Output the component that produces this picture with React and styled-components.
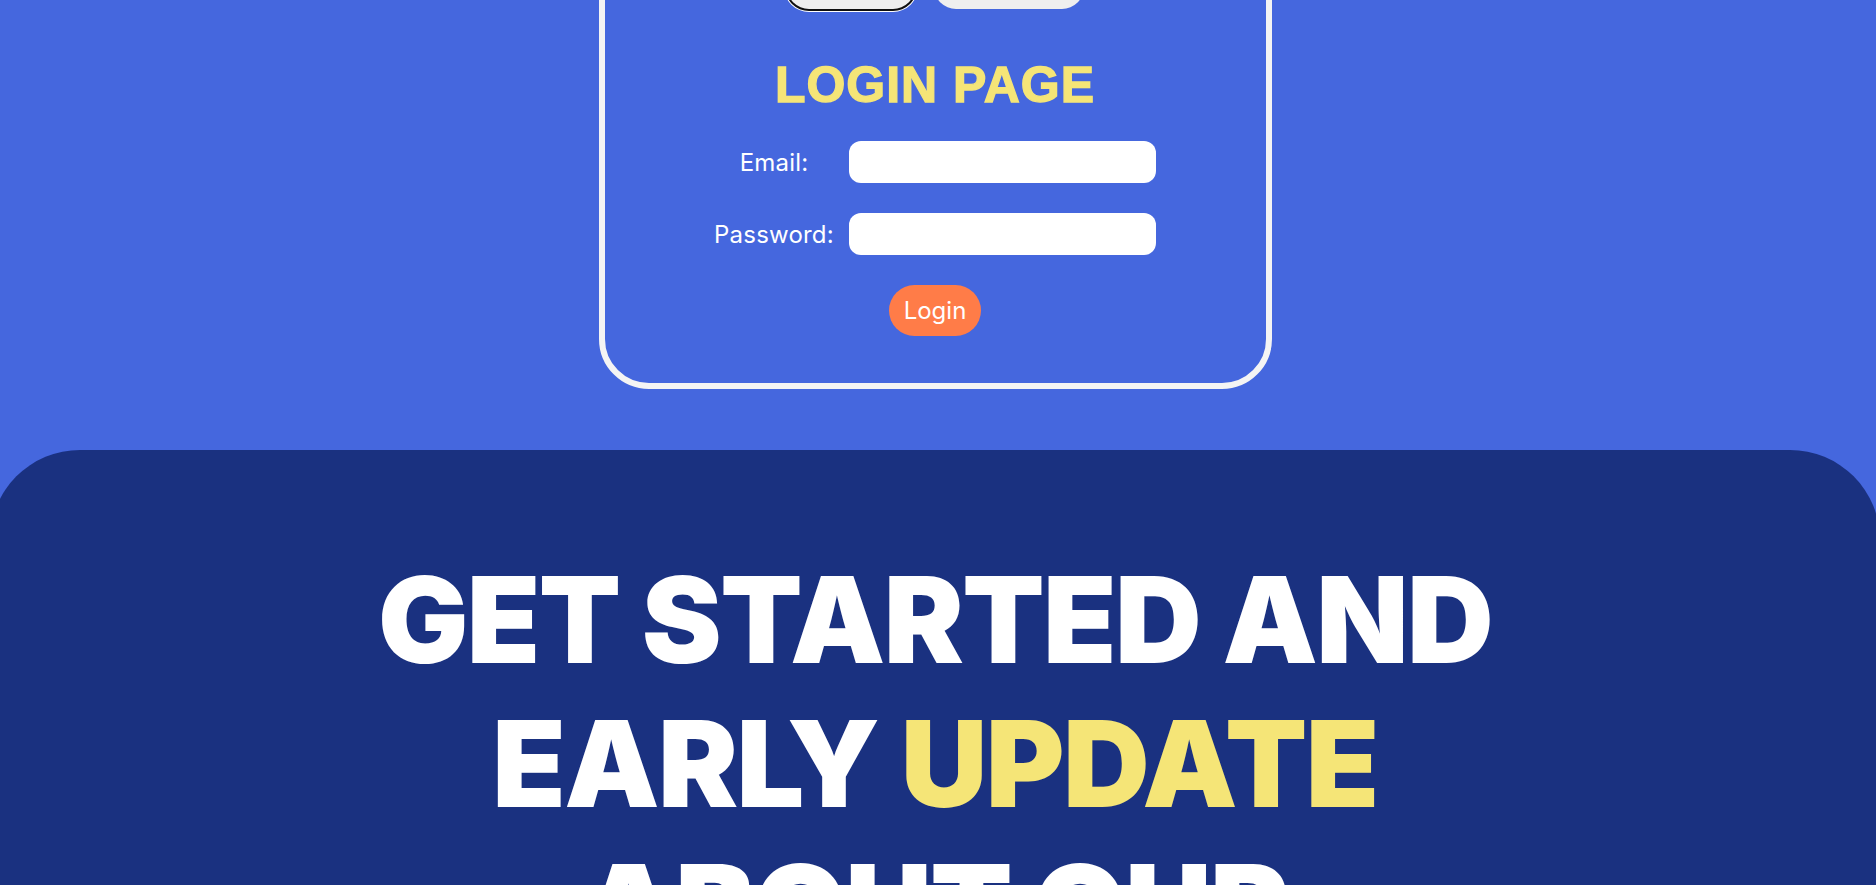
import React from 'react';
import styled, { createGlobalStyle } from 'styled-components';


// styles
const GlobalStyle = createGlobalStyle`
  html, body {
    margin: 0;
    background: #4567de;
    overflow-x: hidden;
  }
`;

const StyledPage = styled.div`
  display: flex;
  flex-direction: column;
  align-items: center;
  padding-right: 6px;
  font-family: Inter, "Liberation Sans", sans-serif;
`;

const StyledCard = styled.div`
  box-sizing: border-box;
  width: 673px;
  margin-top: -61px;
  padding: 20px 0 47px;
  border: 6px solid #f4f4f4;
  border-radius: 50px;
  display: flex;
  flex-direction: column;
  align-items: center;
`;

const StyledTabs = styled.div`
  display: flex;
  gap: 19px;
`;

const StyledTab = styled.button`
  height: 44px;
  width: ${({ width }) => width}px;
  border: none;
  border-radius: 22px;
  background: #efefef;
  color: #000;
  font: 16px Inter, sans-serif;
  box-shadow: ${({ active }) => (active ? '0 0 0 2px #101010, 0 0 0 3px #fff' : 'none')};
`;

const StyledTitle = styled.h1`
  margin: 47px 0 0;
  color: #f5e577;
  font-family: "Liberation Sans", Arial, sans-serif;
  font-weight: 900;
  font-size: 50px;
  line-height: 58px;
  letter-spacing: 1px;
  -webkit-text-stroke: 1.3px #f5e577;
`;

const StyledForm = styled.form`
  margin-top: 27px;
  display: grid;
  grid-template-columns: 120px 307px;
  column-gap: 15px;
  row-gap: 30px;
  align-items: center;
`;

const StyledLabel = styled.label`
  color: #fff;
  font-size: 24px;
  text-align: center;
  white-space: nowrap;
  letter-spacing: 0.2px;
`;

const StyledInput = styled.input`
  box-sizing: border-box;
  height: 42px;
  border: none;
  border-radius: 12px;
  background: #fff;
  outline: none;
`;

const StyledSubmit = styled.button`
  grid-column: 1 / -1;
  justify-self: center;
  width: 92px;
  height: 51px;
  border: none;
  border-radius: 26px;
  background: #ff7c48;
  color: #fff;
  font: 24px Inter, sans-serif;
`;

const StyledHero = styled.section`
  align-self: stretch;
  margin: 61px -10px 0;
  padding: 98px 20px 120px;
  background: #1a3180;
  border-radius: 90px 90px 0 0;
  display: flex;
  justify-content: center;
`;

const StyledHeadline = styled.h2`
  margin: 0;
  max-width: 1200px;
  color: #fff;
  font-family: Inter, sans-serif;
  font-weight: 900;
  font-size: 120px;
  line-height: 144px;
  letter-spacing: -1.6px;
  text-align: center;

  & span {
    color: #f5e577;
  }
`;


// view
const App = () => (
  <>
    <GlobalStyle />
    <StyledPage>
      <StyledCard>
        <StyledTabs>
          <StyledTab active width={128}>Login</StyledTab>
          <StyledTab width={150}>Sign Up</StyledTab>
        </StyledTabs>
        <StyledTitle>LOGIN PAGE</StyledTitle>
        <StyledForm onSubmit={(e) => e.preventDefault()}>
          <StyledLabel htmlFor="email">Email:</StyledLabel>
          <StyledInput id="email" type="email" />
          <StyledLabel htmlFor="password">Password:</StyledLabel>
          <StyledInput id="password" type="password" />
          <StyledSubmit type="submit">Login</StyledSubmit>
        </StyledForm>
      </StyledCard>
      <StyledHero>
        <StyledHeadline>
          GET STARTED AND EARLY <span>UPDATE</span> ABOUT OUR PRODUCT
        </StyledHeadline>
      </StyledHero>
    </StyledPage>
  </>
);


// exports
export default App;
